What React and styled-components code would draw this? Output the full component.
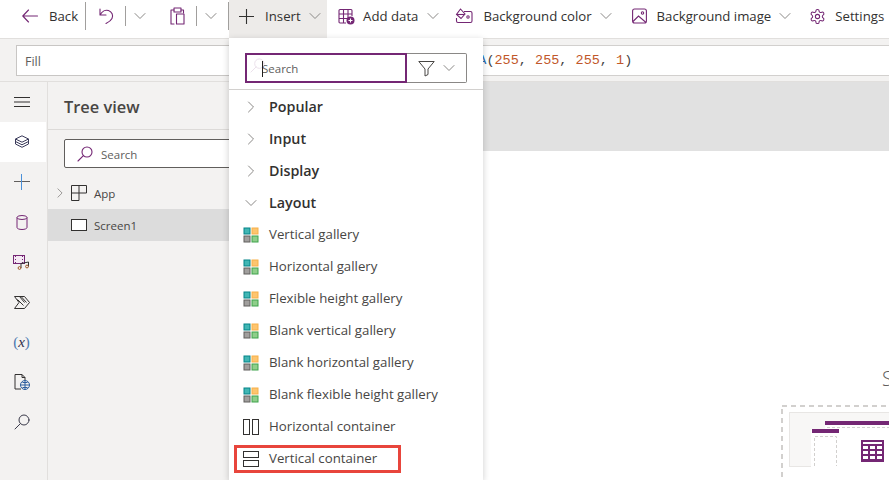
import React from "react";
import styled, { createGlobalStyle } from "styled-components";

const Global = createGlobalStyle`
  html, body { margin: 0; padding: 0; background: #fff; }
  body { font-family: "Open Sans", "Noto Sans", sans-serif; overflow: hidden; }
  * { box-sizing: border-box; }
`;
const Page = styled.div`position: relative; width: 889px; height: 480px; overflow: hidden; background: #fff;`;

/* toolbar */
const Toolbar = styled.div`display: flex; align-items: center; height: 38px; padding: 0 0 6px 22px; background: #fff; white-space: nowrap;`;
const ActiveTool = styled.div`
  display: flex; align-items: center; height: 38px; flex: none; width: 98px;
  margin-bottom: -6px; padding: 0 0 6px 10px; background: #edebe9;
`;
const ToolLabel = styled.span`font-size: 13.2px; color: #323130; margin-left: ${p => p.$ml}px; margin-right: ${p => p.$mr || 0}px;`;
const Sep = styled.div`width: 1px; height: ${p => p.$h || 20}px; background: #a19f9d; margin-left: ${p => p.$ml}px; flex: none;`;
const Slot = styled.span`display: flex; flex: none; margin-left: ${p => p.$ml || 0}px;`;

/* formula */
const FormulaBar = styled.div`
  display: flex; align-items: center; height: 44px; background: #f3f2f1;
  border-top: 1px solid #e1dfdd; border-bottom: 1px solid #e1dfdd; padding-left: 16px;
`;
const FillBox = styled.div`
  width: 220px; height: 31px; background: #fff; border: 1px solid #c8c6c4; flex: none;
  display: flex; align-items: center; padding: 2px 0 0 8px; font-size: 12.5px; color: #605e5c;
`;
const FormulaBox = styled.div`
  flex: 1; height: 31px; background: #fff; border-top: 1px solid #d2d0ce; border-bottom: 1px solid #d2d0ce;
  display: flex; align-items: center; padding: 1px 0 0 218px;
  font-family: "Liberation Mono", monospace; font-size: 13.5px; color: #444; white-space: pre;
`;
const Fn = styled.span`color: #2b6cb0;`;
const Num = styled.span`color: #c1572a;`;

/* body */
const Body = styled.div`display: flex; height: 398px;`;
const Rail = styled.div`width: 48px; flex: none; background: #f3f2f1; border-right: 1px solid #e1dfdd;`;
const RailItem = styled.div`
  height: 40px; width: 46px; display: flex; align-items: center; justify-content: center;
  background: ${p => (p.$active ? "#fff" : "transparent")};
  padding-right: 3px;
`;
const RailParen = styled.span`font-family: "Liberation Serif", serif; font-size: 15px; color: #4a78b0;`;
const RailVar = styled(RailParen)`font-style: italic; color: #2f2d4a;`;

const TreePanel = styled.div`width: 260px; flex: none; background: #f3f2f1;`;
const TreeHead = styled.div`
  height: 48px; display: flex; align-items: center; padding: 1px 0 0 16px;
  font-size: 16.4px; font-weight: 600; color: #484644; border-bottom: 1px solid #dcdad8;
`;
const TreeSearch = styled.div`
  margin: 9px 0 0 16px; height: 29px; background: #fff; border: 1px solid #605e5c; border-radius: 2px;
  display: flex; align-items: center; padding-left: 12px; font-size: 11.5px; color: #605e5c; gap: 8px;
`;
const TreeSearchText = styled.span`position: relative; top: 1px;`;
const TreeRow = styled.div`
  height: ${p => p.$h}px; display: flex; align-items: center; font-size: 11.5px; color: #484644;
  background: ${p => (p.$sel ? "#dcdcdc" : "transparent")};
  padding-left: ${p => p.$pl}px; margin-top: ${p => p.$mt || 0}px;
`;
const TreeLabel = styled.span`margin-left: ${p => p.$ml}px;`;

const Canvas = styled.div`position: relative; flex: 1; background: #fff;`;
const Band = styled.div`height: 69px; background: #e1e1e1;`;
const CanvasHint = styled.div`position: absolute; left: 574px; top: 284px; font-size: 20px; font-weight: 300; color: #605e5c; line-height: 26px; white-space: nowrap;`;
const Placeholder = styled.svg`position: absolute; left: 473px; top: 323px;`;

/* menu */
const Menu = styled.div`
  position: absolute; left: 229px; top: 38px; width: 254px; height: 442px; background: #fff;
  box-shadow: 0 2px 7px rgba(0,0,0,.2); display: flex; flex-direction: column;
`;
const SearchRow = styled.div`display: flex; margin: 15px 0 0 16px; height: 30px; width: 222px;`;
const MenuSearch = styled.div`
  position: relative; width: 162px; height: 30px; border: 2px solid #742774; flex: none;
  display: flex; align-items: center; padding-left: 15px; font-size: 11.5px; color: #605e5c;
`;
const Caret = styled.span`position: absolute; left: 15px; top: 6px; width: 1px; height: 16px; background: #201f1e;`;
const FaintGlass = styled.span`position: absolute; left: 3px; top: 3px; display: flex;`;
const FilterBtn = styled.div`
  flex: 1; height: 30px; border: 1px solid #8a8886; border-left: 0; border-radius: 0 2px 2px 0;
  display: flex; align-items: center; padding-left: 11px; gap: 8px;
`;
const Divider = styled.div`height: 1px; background: #d2d0ce; margin-top: 6px; flex: none;`;
const MenuList = styled.div`display: flex; flex-direction: column; margin-top: 1px;`;
const GroupRow = styled.div`
  height: 32px; display: flex; align-items: center; padding-left: 16px;
  font-size: 14.3px; font-weight: 600; color: #323130;
`;
const GroupLabel = styled.span`margin-left: 12px; position: relative; top: -1px;`;
const ItemRow = styled.div`
  position: relative; height: 32px; display: flex; align-items: center; padding-left: 14px;
  font-size: 13.25px; color: #484644; flex: none;
`;
const ItemLabel = styled.span`margin-left: 10px; position: relative; top: -1px;`;
const Highlight = styled.div`
  position: absolute; left: 5px; top: 2px; width: 167px; height: 28px; border: 3px solid #e8453c;
`;

const s = { fill: "none", strokeLinecap: "round", strokeLinejoin: "round" };
const Chev = ({ dir = "down", size = 12, c = "#8a8886" }) => (
  <svg width={size} height={size} viewBox="0 0 12 12" {...s} stroke={c} strokeWidth="1">
    {dir === "down" ? <path d="M1 3.5 6 8.5 11 3.5" /> : <path d="M3.5 1 8.5 6 3.5 11" />}
  </svg>
);
const P = "#742774";
const Glass = ({ c = P, size = 16, sw = 1.1 }) => (
  <svg width={size} height={size} viewBox="0 0 16 16" {...s} stroke={c} strokeWidth={sw}>
    <circle cx="10" cy="6" r="5" /><path d="M6.4 9.6 1 15" />
  </svg>
);
const GalleryIcon = () => (
  <svg width="16" height="16" viewBox="0 0 16 16">
    <rect x="1" y="1" width="6" height="6" fill="#41b6b4" stroke="#038387" />
    <rect x="9" y="1" width="6" height="6" fill="#fdc56f" stroke="#f7b048" />
    <rect x="1" y="9" width="6" height="6" fill="#a19f9d" stroke="#605e5c" />
    <rect x="9" y="9" width="6" height="6" fill="#8fce8a" stroke="#3fa34d" />
  </svg>
);

const Tools = () => (
  <Toolbar>
    <svg width="16" height="14" viewBox="0 0 16 14" {...s} stroke={P} strokeWidth="1.1"><path d="M15.5 7H.8M6.5 1 .8 7l5.700 6" /></svg>
    <ToolLabel $ml={11}>Back</ToolLabel>
    <Sep $ml={7} $h={28} />
    <Slot $ml={13}><svg width="15" height="18" viewBox="0 0 15 18" {...s} stroke={P} strokeWidth="1.1"><path d="M1 2v6h6M1.2 8C3 4 6.500 2.500 9.500 3.500c3.500 1.200 5 5 3.500 8-1 2-3 3.500-6 5" /></svg></Slot>
    <Sep $ml={11} />
    <Slot $ml={8}><Chev /></Slot>
    <Slot $ml={24}><svg width="15" height="18" viewBox="0 0 15 18" {...s} stroke={P} strokeWidth="1.1"><path d="M4 3H1v14h3M11 3h2.500v3" /><rect x="4" y="1" width="7" height="4" /><rect x="6.500" y="7" width="7.500" height="10" /></svg></Slot>
    <Sep $ml={11} />
    <Slot $ml={8}><Chev /></Slot>
    <Sep $ml={11} $h={28} />
    <ActiveTool>
      <svg width="15" height="15" viewBox="0 0 15 15" stroke="#323130" strokeWidth="1.1"><path d="M7.500 0v15M0 7.500h15" /></svg>
      <ToolLabel $ml={11} $mr={8}>Insert</ToolLabel>
      <Chev />
    </ActiveTool>
    <Slot $ml={11}><svg width="17" height="17" viewBox="0 0 17 17" fill="none" stroke={P} strokeWidth="1.1"><path d="M2 1.500h11a1 1 0 0 1 1 1V8M8 15H2a1 1 0 0 1-1-1V2.500a1 1 0 0 1 1-1M1 6h13M1 10.500h9M5.500 1.500V15M10 1.500V10" /><circle cx="12.500" cy="12.500" r="4" fill={P} stroke="none" /><path d="M12.500 10.500v4M10.500 12.500h4" stroke="#fff" /></svg></Slot>
    <ToolLabel $ml={8} $mr={9}>Add data</ToolLabel>
    <Chev />
    <Slot $ml={16}><svg width="18" height="17" viewBox="0 0 18 17" fill="none" stroke={P} strokeWidth="1.1"><path d="M9 3.500h6.500a1.500 1.500 0 0 1 1.500 1.500v8a1.500 1.500 0 0 1-1.500 1.500H3A1.500 1.500 0 0 1 1.500 13V10" /><path d="M5.500 1 10 6 6 10.500 1.500 6.500Z" /><path d="M1.500 6.500h8" /><circle cx="13" cy="9" r="1.200" /></svg></Slot>
    <ToolLabel $ml={10} $mr={8}>Background color</ToolLabel>
    <Chev />
    <Slot $ml={20}><svg width="15" height="16" viewBox="0 0 15 16" fill="none" stroke={P} strokeWidth="1.1"><rect x=".6" y="1" width="13.800" height="14" rx="2" /><path d="M1 13.500 6.500 8l7.500 6.500" /><circle cx="10.500" cy="5" r="1.200" /></svg></Slot>
    <ToolLabel $ml={10} $mr={8}>Background image</ToolLabel>
    <Chev />
    <Slot $ml={18}><svg width="17" height="17" viewBox="0 0 24 24" fill="none" stroke={P} strokeWidth="1.500" strokeLinecap="round" strokeLinejoin="round"><path d="M12.220 2h-.44a2 2 0 0 0-2 2v.18a2 2 0 0 1-1 1.730l-.43.25a2 2 0 0 1-2 0l-.15-.08a2 2 0 0 0-2.730.73l-.22.38a2 2 0 0 0 .73 2.730l.15.100a2 2 0 0 1 1 1.720v.51a2 2 0 0 1-1 1.740l-.15.090a2 2 0 0 0-.73 2.730l.22.380a2 2 0 0 0 2.730.730l.15-.080a2 2 0 0 1 2 0l.43.250a2 2 0 0 1 1 1.730V20a2 2 0 0 0 2 2h.44a2 2 0 0 0 2-2v-.18a2 2 0 0 1 1-1.730l.43-.25a2 2 0 0 1 2 0l.15.080a2 2 0 0 0 2.730-.730l.22-.390a2 2 0 0 0-.73-2.730l-.15-.080a2 2 0 0 1-1-1.740v-.500a2 2 0 0 1 1-1.740l.15-.090a2 2 0 0 0 .73-2.730l-.22-.380a2 2 0 0 0-2.730-.730l-.15.080a2 2 0 0 1-2 0l-.43-.250a2 2 0 0 1-1-1.730V4a2 2 0 0 0-2-2z" /><circle cx="12" cy="12" r="3" /></svg></Slot>
    <ToolLabel $ml={9}>Settings</ToolLabel>
  </Toolbar>
);

const D = "#323130";
const RailIcons = () => (
  <Rail>
    <RailItem><svg width="16" height="10" viewBox="0 0 16 10" stroke={D}><path d="M0 .5h16M0 5h16M0 9.500h16" /></svg></RailItem>
    <RailItem $active><svg width="16" height="15" viewBox="0 0 16 15" fill="none" stroke="#3a3a5a" strokeWidth="1"><path d="M8 .8 14.500 4 8 7.200 1.500 4Z" /><path d="M1.500 6.500 8 9.800l6.500-3.300M1.500 9 8 12.300 14.500 9M1.500 4v5M14.500 4v5" /></svg></RailItem>
    <RailItem><svg width="16" height="16" viewBox="0 0 16 16"><path d="M0 7.500h16" stroke="#605e5c" /><path d="M7.500 0v16" stroke="#4a90d9" /></svg></RailItem>
    <RailItem><svg width="12" height="15" viewBox="0 0 12 15" fill="none" stroke={P}><ellipse cx="6" cy="2.500" rx="5" ry="2" /><path d="M1 2.500v10c0 1.100 2.200 2 5 2s5-.9 5-2v-10" /></svg></RailItem>
    <RailItem><svg width="17" height="15" viewBox="0 0 17 15" fill="none" stroke={D}><rect x=".5" y=".5" width="11" height="8" fill="#f4e9f4" stroke={P} /><path d="M2.500 1v1M2.500 4v1M2.500 7v1M9.500 1v1M9.500 4v1M9.500 7v1" stroke={P} /><path d="M8 13V8.500l7.500-1.500v4.500" /><circle cx="6.500" cy="13" r="1.400" stroke="#a05a2c" /><circle cx="14" cy="11.500" r="1.400" stroke="#a05a2c" /></svg></RailItem>
    <RailItem><svg width="16" height="13" viewBox="0 0 16 13" fill="none" stroke={D}><path d="M.5.500h10L15.500 6.500l-5 6H.5l4.500-6Z" /><path d="M5.500.5 10.500 6.500M3.500 3.500l6 6 M7.500 1l5 5.500" /></svg></RailItem>
    <RailItem><RailParen>(</RailParen><RailVar>x</RailVar><RailParen>)</RailParen></RailItem>
    <RailItem><svg width="16" height="16" viewBox="0 0 16 16" fill="none" stroke={D}><path d="M7 15H1V.5h7l3 3V6" /><path d="M8 .5v3h3" /><circle cx="11" cy="11" r="4.500" stroke="#2b5c9e" /><path d="M6.500 11h9M11 6.500v9M8.500 8.500h5M8.500 13.500h5" stroke="#2b5c9e" /></svg></RailItem>
    <RailItem><Glass c="#3a3a4a" size={16} sw={1} /></RailItem>
  </Rail>
);

const galleries = ["Vertical gallery", "Horizontal gallery", "Flexible height gallery", "Blank vertical gallery", "Blank horizontal gallery", "Blank flexible height gallery"];
const cols = [81, 88, 95];
const rows = [41, 46, 51];

export default function App() {
  return (
    <Page>
      <Global />
      <Tools />
      <FormulaBar>
        <FillBox>Fill</FillBox>
        <FormulaBox>
          <span><Fn>RGBA</Fn>(<Num>255</Num>, <Num>255</Num>, <Num>255</Num>, <Num>1</Num>)</span>
        </FormulaBox>
      </FormulaBar>
      <Body>
        <RailIcons />
        <TreePanel>
          <TreeHead>Tree view</TreeHead>
          <TreeSearch><Glass /><TreeSearchText>Search</TreeSearchText></TreeSearch>
          <TreeRow $h={30} $pl={7} $mt={10}>
            <Chev dir="right" size={10} />
            <Slot $ml={6}><svg width="16" height="16" viewBox="0 0 16 16" fill="none" stroke={D}><path d="M.5.500h15v7.500H8v7.500H.5ZM.5 8H8V.5" /></svg></Slot>
            <TreeLabel $ml={7}>App</TreeLabel>
          </TreeRow>
          <TreeRow $h={32} $pl={23} $sel $mt={1}>
            <svg width="16" height="12" viewBox="0 0 16 12"><rect x=".5" y=".5" width="15" height="11" fill="#fff" stroke={D} /></svg>
            <TreeLabel $ml={7}>Screen1</TreeLabel>
          </TreeRow>
        </TreePanel>
        <Canvas>
          <Band />
          <CanvasHint>S</CanvasHint>
          <Placeholder width="108" height="75" viewBox="0 0 108 75">
            <rect x="1" y="1" width="130" height="90" fill="#fff" stroke="#d2d0ce" strokeWidth="2" strokeDasharray="5 4" />
            <rect x="8.500" y="7.500" width="110" height="54" fill="#f8f7f6" stroke="#e8e6e4" />
            <rect x="44" y="16" width="70" height="46" fill="#fff" />
            <rect x="30" y="24" width="27" height="38" fill="#fff" />
            <rect x="44" y="16" width="70" height="4" fill={P} />
            <path d="M46 22.500h70" stroke="#d2d0ce" strokeDasharray="3 2" />
            <rect x="31" y="24" width="27" height="4" fill={P} />
            <path d="M33.500 61V31.500h22V61" stroke="#d2d0ce" fill="none" strokeDasharray="3 2" />
            <rect x="80" y="35" width="23" height="22" fill={P} />
            <rect x="82" y="37" width="19" height="2" fill="#fff" />
            {rows.map(y => cols.map(x => <rect key={x + "-" + y} x={x + 1} y={y} width="5" height="3" fill="#fff" />))}
          </Placeholder>
        </Canvas>
      </Body>
      <Menu>
        <SearchRow>
          <MenuSearch>
            <FaintGlass><Glass c="#eadfea" size={15} sw={1} /></FaintGlass>
            <Caret />
            Search
          </MenuSearch>
          <FilterBtn>
            <svg width="17" height="17" viewBox="0 0 17 17" fill="none" stroke="#484644"><path d="M.8 1.500h15.400L10 9v5.500l-3 1.500V9Z" /></svg>
            <Chev />
          </FilterBtn>
        </SearchRow>
        <Divider />
        <MenuList>
          {["Popular", "Input", "Display"].map(g => (
            <GroupRow key={g}><Chev dir="right" size={12} /><GroupLabel>{g}</GroupLabel></GroupRow>
          ))}
          <GroupRow><Chev size={12} /><GroupLabel>Layout</GroupLabel></GroupRow>
          {galleries.map(g => (
            <ItemRow key={g}><GalleryIcon /><ItemLabel>{g}</ItemLabel></ItemRow>
          ))}
          <ItemRow>
            <svg width="16" height="16" viewBox="0 0 16 16" fill="none" stroke={D}><rect x=".5" y=".5" width="6" height="15" /><rect x="9.500" y=".5" width="6" height="15" /></svg>
            <ItemLabel>Horizontal container</ItemLabel>
          </ItemRow>
          <ItemRow>
            <Highlight />
            <svg width="16" height="16" viewBox="0 0 16 16" fill="none" stroke={D}><rect x=".5" y=".5" width="15" height="6" /><rect x=".5" y="9.500" width="15" height="6" /></svg>
            <ItemLabel>Vertical container</ItemLabel>
          </ItemRow>
        </MenuList>
      </Menu>
    </Page>
  );
}
